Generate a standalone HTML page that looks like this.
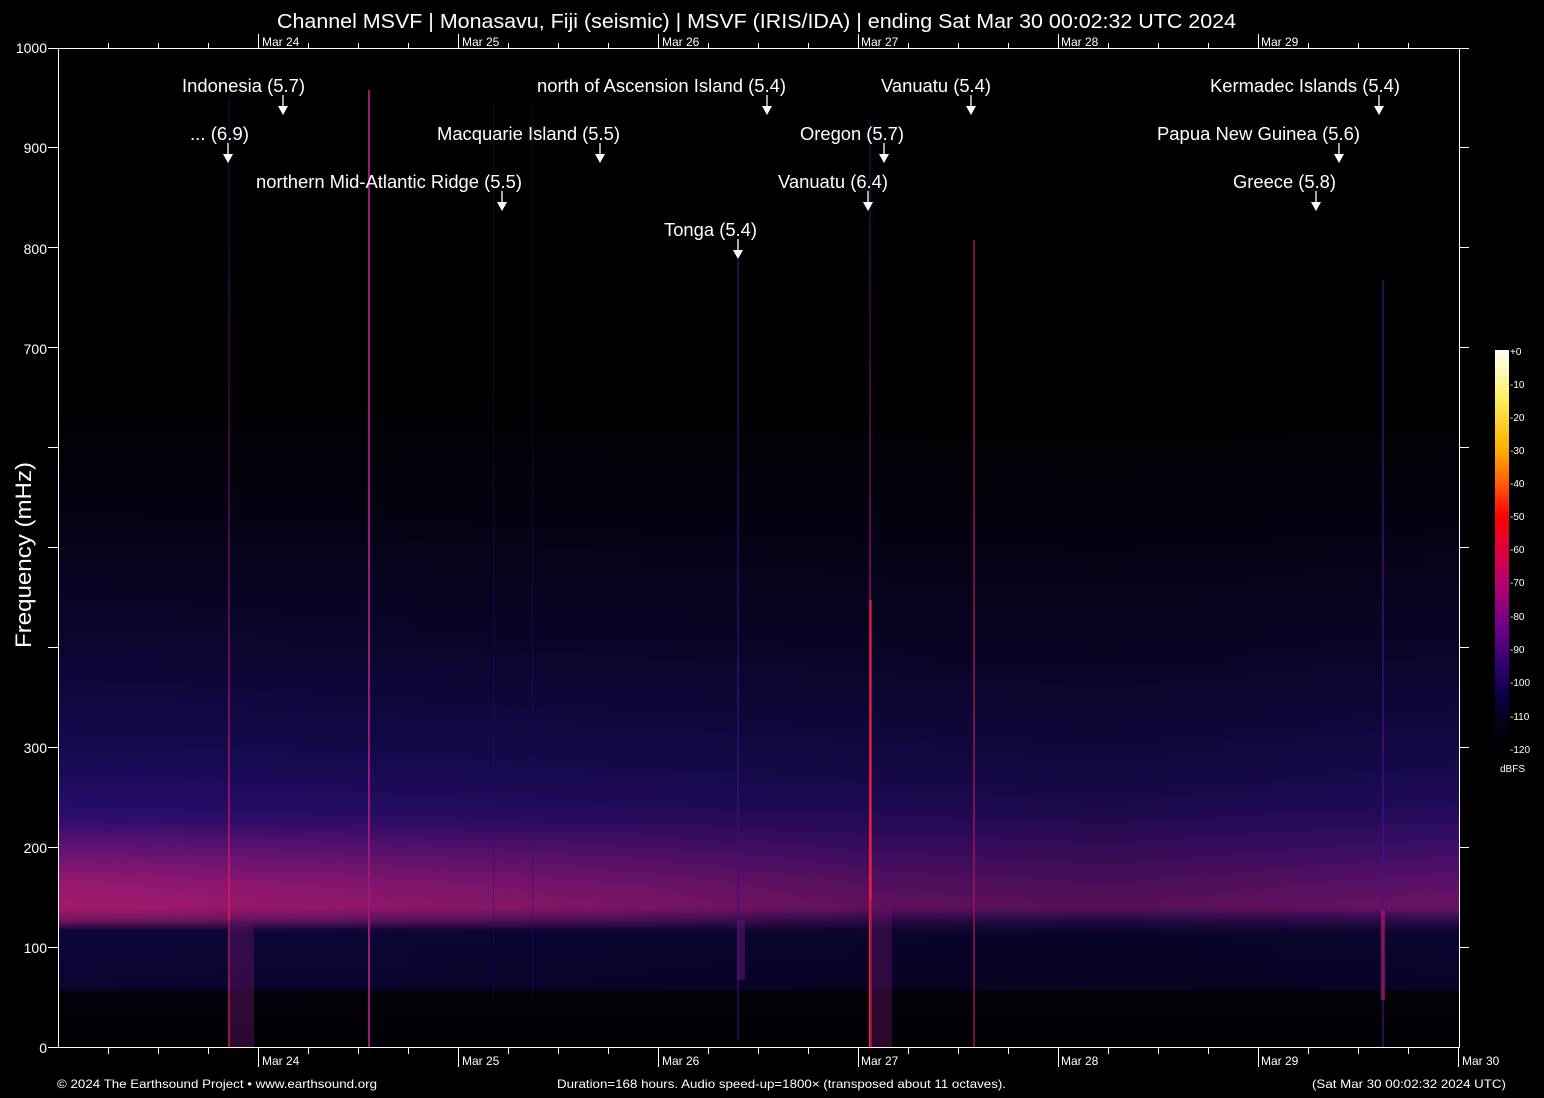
<!DOCTYPE html>
<html><head><meta charset="utf-8"><style>html,body{margin:0;padding:0;background:#000;}svg{display:block}</style></head>
<body>
<svg width="1544" height="1098" viewBox="0 0 1544 1098" xmlns="http://www.w3.org/2000/svg" font-family="Liberation Sans, Arial, sans-serif">
<defs>
<linearGradient id="v" x1="0" y1="48" x2="0" y2="1047" gradientUnits="userSpaceOnUse">
<stop offset="0" stop-color="#000"/>
<stop offset="0.35" stop-color="#000"/>
<stop offset="0.45" stop-color="#030210"/>
<stop offset="0.60" stop-color="#0a0630"/>
<stop offset="0.70" stop-color="#140a50"/>
<stop offset="0.76" stop-color="#260c6a"/>
<stop offset="0.80" stop-color="#48107a"/>
<stop offset="0.84" stop-color="#6e147c"/>
<stop offset="0.86" stop-color="#7e1676"/>
<stop offset="0.872" stop-color="#3a0e60"/>
<stop offset="0.885" stop-color="#0c0638"/>
<stop offset="0.94" stop-color="#0a0530"/>
<stop offset="0.946" stop-color="#020108"/>
<stop offset="1" stop-color="#010004"/>
</linearGradient>
<linearGradient id="h" x1="58" y1="0" x2="1459" y2="0" gradientUnits="userSpaceOnUse">
<stop offset="0" stop-color="#000" stop-opacity="0"/>
<stop offset="0.5" stop-color="#000" stop-opacity="0.2"/>
<stop offset="0.75" stop-color="#000" stop-opacity="0.3"/>
<stop offset="1" stop-color="#000" stop-opacity="0.15"/>
</linearGradient>
<linearGradient id="hr" x1="58" y1="0" x2="1459" y2="0" gradientUnits="userSpaceOnUse">
<stop offset="0" stop-color="#d02060" stop-opacity="0.45"/>
<stop offset="0.35" stop-color="#c02060" stop-opacity="0.25"/>
<stop offset="0.6" stop-color="#c02060" stop-opacity="0"/>
</linearGradient>
<linearGradient id="hb" x1="0" y1="820" x2="0" y2="930" gradientUnits="userSpaceOnUse">
<stop offset="0" stop-color="#fff" stop-opacity="0"/>
<stop offset="0.6" stop-color="#fff" stop-opacity="1"/>
<stop offset="0.9" stop-color="#fff" stop-opacity="1"/>
<stop offset="1" stop-color="#fff" stop-opacity="0"/>
</linearGradient>
<mask id="m"><rect x="58" y="820" width="1401" height="110" fill="url(#hb)"/></mask>
<linearGradient id="cb" x1="0" y1="350" x2="0" y2="745" gradientUnits="userSpaceOnUse">
<stop offset="0" stop-color="#fffff8"/>
<stop offset="0.12" stop-color="#fff060"/>
<stop offset="0.25" stop-color="#ffb000"/>
<stop offset="0.35" stop-color="#ff5010"/>
<stop offset="0.42" stop-color="#ff0000"/>
<stop offset="0.5" stop-color="#e0003a"/>
<stop offset="0.6" stop-color="#b00070"/>
<stop offset="0.7" stop-color="#700088"/>
<stop offset="0.8" stop-color="#300070"/>
<stop offset="0.88" stop-color="#0a0040"/>
<stop offset="1" stop-color="#000"/>
</linearGradient>
<linearGradient id="vl" x1="0" y1="48" x2="0" y2="1047" gradientUnits="userSpaceOnUse">
<stop offset="0" stop-color="#3010a0" stop-opacity="0.3"/>
<stop offset="0.5" stop-color="#a01080" stop-opacity="0.6"/>
<stop offset="1" stop-color="#ff2040"/>
</linearGradient>
</defs>
<rect width="1544" height="1098" fill="#000"/>
<rect x="58" y="48" width="1401" height="999" fill="url(#v)"/>
<rect x="58" y="48" width="1401" height="999" fill="url(#h)"/>
<rect x="58" y="820" width="1401" height="110" fill="url(#hr)" mask="url(#m)"/>
<!-- quake lines -->
<rect x="228" y="100" width="2" height="947" fill="url(#vl)" opacity="0.8"/>
<rect x="228" y="920" width="26" height="127" fill="#5a1260" opacity="0.5"/>
<rect x="368" y="90" width="2" height="957" fill="#9a1878"/>
<rect x="737" y="260" width="2" height="780" fill="#3a1080" opacity="0.6"/>
<rect x="737" y="920" width="8" height="60" fill="#6a1470" opacity="0.5"/>
<rect x="869" y="120" width="2" height="927" fill="url(#vl)"/>
<rect x="869" y="600" width="3" height="447" fill="#ff2030" opacity="0.6"/>
<rect x="870" y="900" width="22" height="147" fill="#601260" opacity="0.45"/>
<rect x="973" y="240" width="2" height="807" fill="#a01850" opacity="0.7"/>
<rect x="1382" y="280" width="2" height="767" fill="#4a1090" opacity="0.6"/>
<rect x="1381" y="910" width="4" height="90" fill="#c01860" opacity="0.6"/>
<rect x="493" y="100" width="1" height="900" fill="#20107a" opacity="0.4"/>
<rect x="532" y="100" width="1" height="900" fill="#20107a" opacity="0.4"/>
<!-- axes -->
<g stroke="#fff" stroke-width="1" fill="none">
<path d="M58.5 48V1047.5H1459.5V48M58 48.5H1459"/>
<path d="M48 1047.5H58M48 947.5H58M48 847.5H58M48 747.5H58M48 647.5H58M48 547.5H58M48 447.5H58M48 347.5H58M48 247.5H58M48 147.5H58M48 48.5H58"/>
<path d="M1459 947.5H1469M1459 847.5H1469M1459 747.5H1469M1459 647.5H1469M1459 547.5H1469M1459 447.5H1469M1459 347.5H1469M1459 247.5H1469M1459 147.5H1469M1459 48.5H1469"/>
<path d="M108.5 1047v7M158.5 1047v7M208.5 1047v7M308.5 1047v7M358.5 1047v7M408.5 1047v7M508.5 1047v7M558.5 1047v7M608.5 1047v7M708.5 1047v7M758.5 1047v7M808.5 1047v7M908.5 1047v7M958.5 1047v7M1008.5 1047v7M1108.5 1047v7M1158.5 1047v7M1208.5 1047v7M1308.5 1047v7M1358.5 1047v7M1408.5 1047v7"/>
<path d="M258.5 1047v20M458.5 1047v20M658.5 1047v20M858.5 1047v20M1058.5 1047v20M1258.5 1047v20M1458.5 1047v20"/>
<path d="M108.5 48v-5M158.5 48v-5M208.5 48v-5M308.5 48v-5M358.5 48v-5M408.5 48v-5M508.5 48v-5M558.5 48v-5M608.5 48v-5M708.5 48v-5M758.5 48v-5M808.5 48v-5M908.5 48v-5M958.5 48v-5M1008.5 48v-5M1108.5 48v-5M1158.5 48v-5M1208.5 48v-5M1308.5 48v-5M1358.5 48v-5M1408.5 48v-5"/>
<path d="M258.5 48v-14M458.5 48v-14M658.5 48v-14M858.5 48v-14M1058.5 48v-14M1258.5 48v-14"/>
</g>
<g fill="#fff" font-size="14" text-anchor="end">
<text x="47" y="53">1000</text><text x="47" y="153">900</text><text x="47" y="254">800</text><text x="47" y="354">700</text>
<text x="47" y="753">300</text><text x="47" y="853">200</text><text x="47" y="953">100</text><text x="47" y="1053">0</text>
</g>
<g fill="#fff" font-size="12">
<text x="262" y="46">Mar 24</text><text x="462" y="46">Mar 25</text><text x="662" y="46">Mar 26</text><text x="861" y="46">Mar 27</text><text x="1061" y="46">Mar 28</text><text x="1261" y="46">Mar 29</text>
<text x="262" y="1065">Mar 24</text><text x="462" y="1065">Mar 25</text><text x="662" y="1065">Mar 26</text><text x="861" y="1065">Mar 27</text><text x="1061" y="1065">Mar 28</text><text x="1261" y="1065">Mar 29</text><text x="1462" y="1065">Mar 30</text>
<text x="57" y="1088" textLength="320" lengthAdjust="spacingAndGlyphs">© 2024 The Earthsound Project • www.earthsound.org</text>
<text x="557" y="1088" textLength="449" lengthAdjust="spacingAndGlyphs">Duration=168 hours. Audio speed-up=1800× (transposed about 11 octaves).</text>
<text x="1312" y="1088" textLength="194" lengthAdjust="spacingAndGlyphs">(Sat Mar 30 00:02:32 2024 UTC)</text>
</g>
<text x="277" y="28" fill="#fff" font-size="20" textLength="959" lengthAdjust="spacingAndGlyphs">Channel MSVF | Monasavu, Fiji (seismic) | MSVF (IRIS/IDA) | ending Sat Mar 30 00:02:32 UTC 2024</text>
<text transform="translate(31,555) rotate(-90)" fill="#fff" font-size="22" text-anchor="middle" textLength="186" lengthAdjust="spacingAndGlyphs">Frequency (mHz)</text>
<!-- colorbar -->
<rect x="1495" y="350" width="14" height="395" fill="url(#cb)"/>
<g fill="#fff" font-size="10">
<text x="1510" y="355">+0</text><text x="1510" y="388">-10</text><text x="1510" y="421">-20</text><text x="1510" y="454">-30</text><text x="1510" y="487">-40</text><text x="1510" y="520">-50</text><text x="1510" y="553">-60</text><text x="1510" y="586">-70</text><text x="1510" y="620">-80</text><text x="1510" y="653">-90</text><text x="1510" y="686">-100</text><text x="1510" y="720">-110</text><text x="1510" y="753">-120</text>
<text x="1500" y="772">dBFS</text>
</g>
<!-- annotations -->
<g fill="#fff" font-size="18" lengthAdjust="spacingAndGlyphs">
<text x="182" y="92" textLength="123" lengthAdjust="spacingAndGlyphs">Indonesia (5.7)</text>
<text x="190" y="140" textLength="59" lengthAdjust="spacingAndGlyphs">... (6.9)</text>
<text x="256" y="188" textLength="266" lengthAdjust="spacingAndGlyphs">northern Mid-Atlantic Ridge (5.5)</text>
<text x="537" y="92" textLength="249" lengthAdjust="spacingAndGlyphs">north of Ascension Island (5.4)</text>
<text x="437" y="140" textLength="183" lengthAdjust="spacingAndGlyphs">Macquarie Island (5.5)</text>
<text x="664" y="236" textLength="93" lengthAdjust="spacingAndGlyphs">Tonga (5.4)</text>
<text x="881" y="92" textLength="110" lengthAdjust="spacingAndGlyphs">Vanuatu (5.4)</text>
<text x="800" y="140" textLength="104" lengthAdjust="spacingAndGlyphs">Oregon (5.7)</text>
<text x="778" y="188" textLength="110" lengthAdjust="spacingAndGlyphs">Vanuatu (6.4)</text>
<text x="1210" y="92" textLength="190" lengthAdjust="spacingAndGlyphs">Kermadec Islands (5.4)</text>
<text x="1157" y="140" textLength="203" lengthAdjust="spacingAndGlyphs">Papua New Guinea (5.6)</text>
<text x="1233" y="188" textLength="103" lengthAdjust="spacingAndGlyphs">Greece (5.8)</text>
</g>
<g fill="#fff" stroke="#fff" stroke-width="1.3">
<path d="M283 95v11M228 143v11M502 191v11M767 95v11M600 143v11M738 239v11M971 95v11M884 143v11M868 191v11M1379 95v11M1339 143v11M1316 191v11"/>
</g>
<g fill="#fff">
<path d="M278 106h10l-5 9z"/><path d="M223 154h10l-5 9z"/><path d="M497 202h10l-5 9z"/><path d="M762 106h10l-5 9z"/><path d="M595 154h10l-5 9z"/><path d="M733 250h10l-5 9z"/><path d="M966 106h10l-5 9z"/><path d="M879 154h10l-5 9z"/><path d="M863 202h10l-5 9z"/><path d="M1374 106h10l-5 9z"/><path d="M1334 154h10l-5 9z"/><path d="M1311 202h10l-5 9z"/>
</g>
</svg>
</body></html>
